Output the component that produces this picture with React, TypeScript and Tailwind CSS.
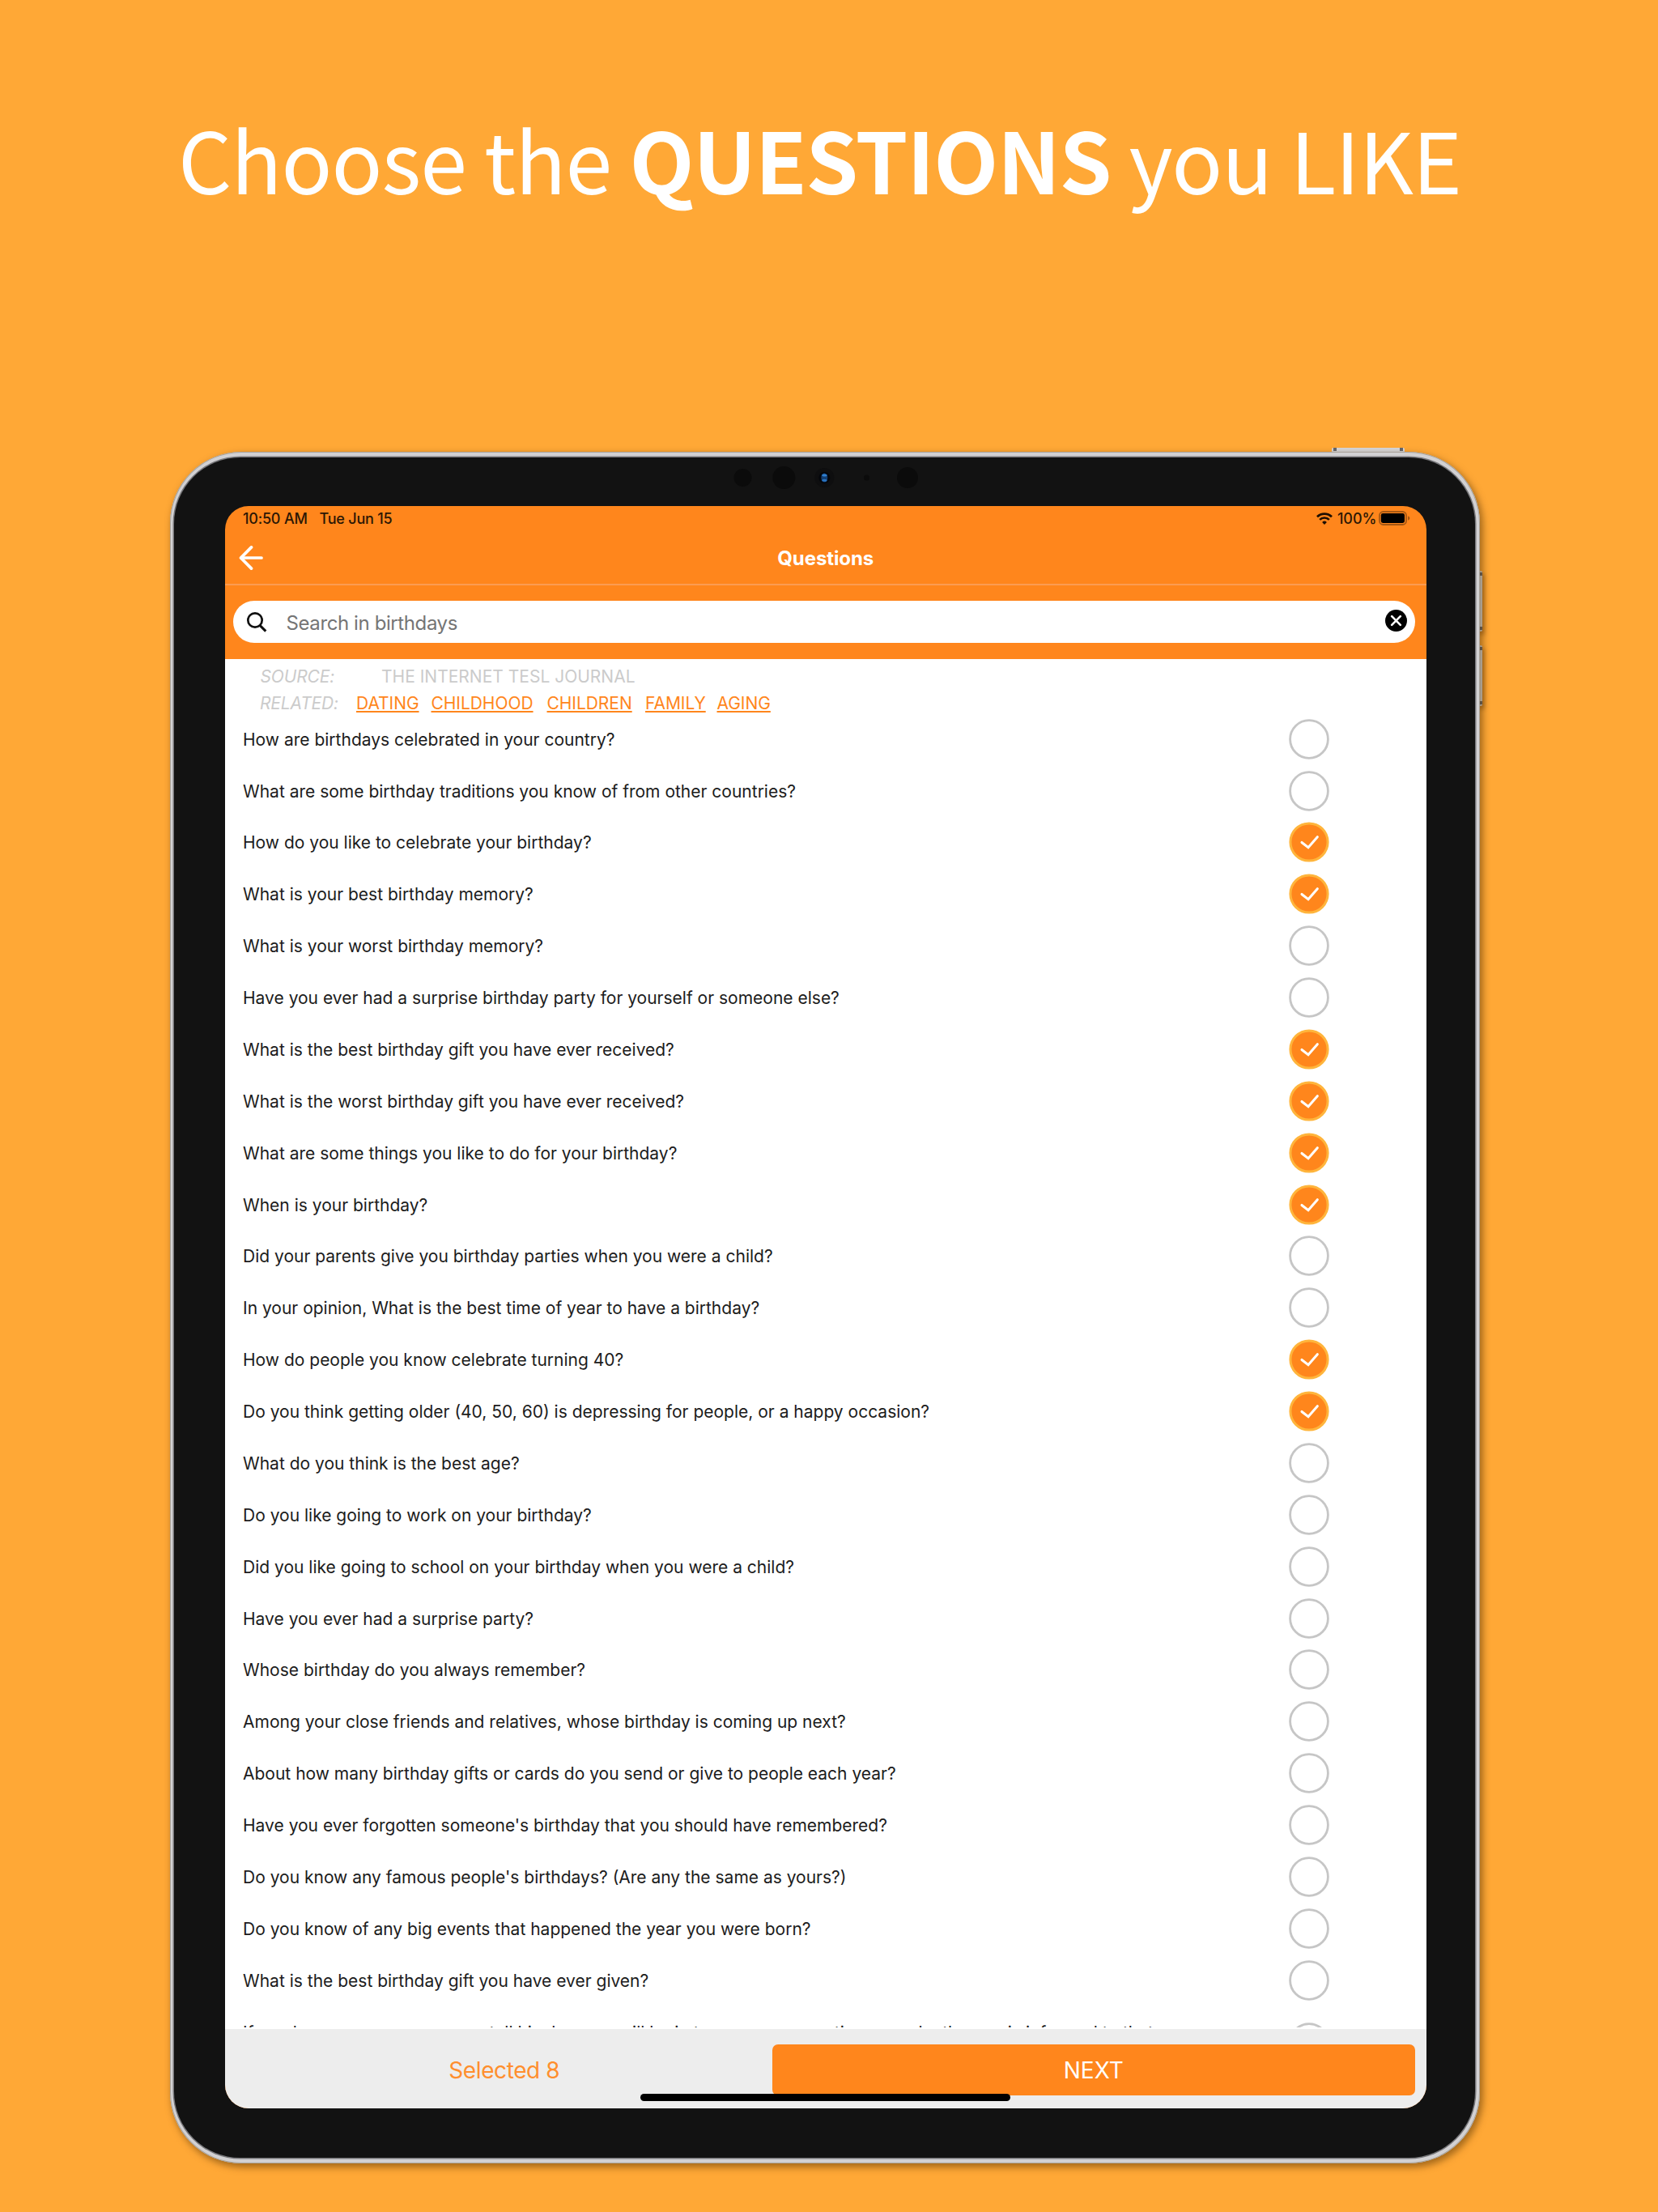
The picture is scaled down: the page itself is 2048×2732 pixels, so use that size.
type Question = { text: string; checked?: boolean; twoLine?: boolean };

const QUESTIONS: Question[] = [
  { text: 'How are birthdays celebrated in your country?' },
  { text: 'What are some birthday traditions you know of from other countries?' },
  { text: 'How do you like to celebrate your birthday?', checked: true },
  { text: 'What is your best birthday memory?', checked: true },
  { text: 'What is your worst birthday memory?' },
  { text: 'Have you ever had a surprise birthday party for yourself or someone else?' },
  { text: 'What is the best birthday gift you have ever received?', checked: true },
  { text: 'What is the worst birthday gift you have ever received?', checked: true },
  { text: 'What are some things you like to do for your birthday?', checked: true },
  { text: 'When is your birthday?', checked: true },
  { text: 'Did your parents give you birthday parties when you were a child?' },
  { text: 'In your opinion, What is the best time of year to have a birthday?' },
  { text: 'How do people you know celebrate turning 40?', checked: true },
  { text: 'Do you think getting older (40, 50, 60) is depressing for people, or a happy occasion?', checked: true },
  { text: 'What do you think is the best age?' },
  { text: 'Do you like going to work on your birthday?' },
  { text: 'Did you like going to school on your birthday when you were a child?' },
  { text: 'Have you ever had a surprise party?' },
  { text: 'Whose birthday do you always remember?' },
  { text: 'Among your close friends and relatives, whose birthday is coming up next?' },
  { text: 'About how many birthday gifts or cards do you send or give to people each year?' },
  { text: "Have you ever forgotten someone's birthday that you should have remembered?" },
  { text: "Do you know any famous people's birthdays? (Are any the same as yours?)" },
  { text: 'Do you know of any big events that happened the year you were born?' },
  { text: 'What is the best birthday gift you have ever given?' },
  { text: 'If you have a person over, can tell him how we will be in two or more questions, or why the one is informed to that', twoLine: true },
];

const RELATED = [
  { label: 'DATING', width: 'w-[76.5px]' },
  { label: 'CHILDHOOD', width: 'w-[127px]' },
  { label: 'CHILDREN', width: 'w-[105.5px]' },
  { label: 'FAMILY', width: 'w-[72.5px]' },
  { label: 'AGING', width: 'w-[66px]' },
];

function Toggle({ checked }: { checked?: boolean }) {
  return (
    <svg className="size-[50px] shrink-0" viewBox="-25 -25 50 50" fill="none">
      {checked ? (
        <>
          <circle r="23.1" fill="#ff861c" stroke="#ffb53c" strokeWidth="3" />
          <path d="M-9 0.5L-1 6.7L10.3-6.3" stroke="#fff" strokeWidth="3.1" strokeLinecap="round" />
        </>
      ) : (
        <circle r="23.4" stroke="#c6c6c6" strokeWidth="2.8" />
      )}
    </svg>
  );
}

function StatusBar() {
  return (
    <div className="flex h-[31px] shrink-0 items-center pl-[22px] pr-[19.5px] text-[18px] font-medium text-[#2b1705]">
      <span className="w-[94.5px] tracking-[-0.2px]">10:50 AM</span>
      <span className="tracking-[-0.2px]">Tue Jun 15</span>
      <svg className="ml-auto mr-[6px] h-[15px] w-[20px]" viewBox="0 0 20 15" fill="none" stroke="#1d0f03" strokeWidth="2.7">
        <path d="M1 5.3a12.7 12.7 0 0 1 18 0" />
        <path d="M4.2 8.9a8.2 8.2 0 0 1 11.6 0" />
        <path d="M10 14.9L7.1 11.9a4.1 4.1 0 0 1 5.8 0Z" fill="#1d0f03" stroke="none" />
      </svg>
      <span className="w-[51px] tracking-[-0.1px]">100%</span>
      <svg className="h-[18px] w-[39px]" viewBox="0 0 39 18" fill="none">
        <rect x="1" y="1" width="33" height="16" rx="4.5" stroke="#000" strokeOpacity=".35" strokeWidth="1.8" />
        <rect x="2.8" y="3" width="29.2" height="12" rx="2.4" fill="#000" />
        <path d="M36.2 6.3Q38.4 7.2 38.4 9T36.2 11.7Z" fill="#000" fillOpacity=".4" />
      </svg>
    </div>
  );
}

function NavBar() {
  return (
    <div className="flex h-[67px] shrink-0 items-center border-b-[2.5px] border-[#fb9c52] pl-[17px]">
      <svg className="mt-[2px] h-[30px] w-[31px]" viewBox="0 0 31 30" fill="none" stroke="#fff" strokeWidth="3.7" strokeLinecap="round" strokeLinejoin="round">
        <path d="M15.5 1.9L2.5 15L15.5 28.1" />
        <path d="M3 15H28" />
      </svg>
      <div className="mt-[3px] flex-1 pr-[48px] text-center text-[24px] font-bold tracking-[-0.1px] text-white">Questions</div>
    </div>
  );
}

function SearchBar() {
  return (
    <div className="flex h-[91.5px] shrink-0 items-center px-[10px] pr-[13.5px]">
      <div className="mb-px flex h-[51.5px] flex-1 items-center rounded-full bg-white pl-[16px] pr-[10px]">
        <svg className="size-[26px]" viewBox="0 0 26 26" fill="none" stroke="#111" strokeWidth="2.7">
          <circle cx="11" cy="11" r="8.7" />
          <path d="M17 17.3L24.3 24.6" strokeWidth="3.1" />
        </svg>
        <span className="ml-[23.5px] mt-[4px] text-[24px] tracking-[-0.4px] text-[#757575]">Search in birthdays</span>
        <svg className="mb-[3px] ml-auto size-[27px]" viewBox="0 0 27 27">
          <circle cx="13.5" cy="13.5" r="13.5" fill="#000" />
          <path d="M8.2 8.2L18.8 18.8M18.8 8.2L8.2 18.8" stroke="#fff" strokeWidth="2.6" strokeLinecap="round" />
        </svg>
      </div>
    </div>
  );
}

function QuestionList() {
  return (
    <div className="flex-1 overflow-hidden bg-white pt-[4px] text-[21px] leading-[26px] text-[#1c1c1c]">
      <div className="flex h-[33.5px] items-center pl-[43.5px] pt-[1.5px] text-[#cbcbcb]">
        <span className="w-[149.5px] italic tracking-[-0.15px]">SOURCE:</span>
        <span>THE INTERNET TESL JOURNAL</span>
      </div>
      <div className="flex h-[29.3px] items-center gap-[16px] pl-[43px] pt-[6px] text-[#ff861c]">
        <span className="w-[103px] italic tracking-[-0.15px] text-[#cbcbcb]">RELATED:</span>
        {RELATED.map((r) => (
          <a key={r.label} className={`${r.width} whitespace-nowrap tracking-[-0.05px] underline decoration-[2px] underline-offset-[2px]`}>
            {r.label}
          </a>
        ))}
      </div>
      {QUESTIONS.map((q) => (
        <div
          key={q.text}
          className={`flex items-center justify-between pl-[22px] pr-[120px] ${q.twoLine ? 'h-[89.875px]' : 'h-[63.875px]'}`}
        >
          <span className={`whitespace-nowrap pt-[2px] ${q.twoLine ? 'pb-[26px]' : ''}`}>{q.text}</span>
          <Toggle checked={q.checked} />
        </div>
      ))}
    </div>
  );
}

function Footer() {
  return (
    <div className="relative flex h-[100px] shrink-0 border-t-2 border-white bg-[#ededed] pr-[13.5px] pt-[18.5px] text-[28px]">
      <div className="flex h-[63.5px] w-[675.5px] items-center justify-center pl-[14px] pt-px tracking-[-0.4px] text-[#ff8f2e]">Selected 8</div>
      <div className="flex h-[63.5px] flex-1 items-center justify-center rounded-[7px] bg-[#ff861c] pt-px text-white">NEXT</div>
      <div className="absolute bottom-[9.5px] left-[513px] h-[9px] w-[457px] rounded-full bg-black" />
    </div>
  );
}

function CameraRow() {
  return (
    <svg className="absolute left-[696px] top-[17px] h-[30px] w-[240px]" viewBox="0 0 240 30">
      <g fill="#0b0b0b">
        <circle cx="11.5" cy="15" r="11" />
        <circle cx="62.3" cy="15" r="14" />
        <circle cx="112.3" cy="15" r="12" fill="#0e0e0f" />
        <circle cx="164.5" cy="15" r="3.5" />
        <circle cx="215" cy="15" r="13" />
      </g>
      <circle cx="112.3" cy="15" r="7" fill="#04060b" />
      <ellipse cx="112.3" cy="15" rx="4" ry="5.5" fill="#123e73" />
      <ellipse cx="112.3" cy="12" rx="3.2" ry="1.5" fill="#2f7fd0" />
      <ellipse cx="112.3" cy="18.2" rx="3.2" ry="1.5" fill="#2a74c0" />
    </svg>
  );
}

function SideButton({ className }: { className: string }) {
  return (
    <div className={`absolute flex justify-between bg-[#d6d6d8] ${className}`}>
      <span className="size-[4px] bg-[#66676b]" />
      <span className="size-[4px] bg-[#66676b]" />
    </div>
  );
}

function Tablet() {
  return (
    <div className="relative mx-[209.5px] h-[2113.5px] w-[1618px]">
      <SideButton className="left-[1435px] top-[-5px] h-[8px] w-[90px] rounded-t-[2px] px-[2px]" />
      <SideButton className="right-[-3.5px] top-[147px] h-[75px] w-[8px] flex-col items-end rounded-r-[2px] py-[2px] shadow-[3px_4px_5px_rgba(90,50,0,0.35)]" />
      <SideButton className="right-[-3.5px] top-[239px] h-[75px] w-[8px] flex-col items-end rounded-r-[2px] py-[2px] shadow-[3px_4px_5px_rgba(90,50,0,0.35)]" />
      <div className="relative size-full rounded-[88px] bg-[#d2d1d3] px-[5.5px] py-[7px] shadow-[3px_4px_8px_1px_rgba(80,45,0,0.5),inset_0_0_0_1px_#a9a39b]">
        <div className="size-full rounded-[82px] bg-[#121212] pb-[60.5px] pl-[63px] pr-[60.5px] pt-[59.5px] shadow-[0_0_0_1.5px_#77777a]">
          <div className="flex size-full flex-col overflow-hidden rounded-[29px] bg-[#ff861c]">
            <StatusBar />
            <NavBar />
            <SearchBar />
            <QuestionList />
            <Footer />
          </div>
        </div>
        <CameraRow />
      </div>
    </div>
  );
}

export default function App() {
  return (
    <div className="h-[2732px] w-[2048px] overflow-hidden bg-[#ffa836] font-['Inter',sans-serif]">
      <h1 className="h-[558px] whitespace-pre pl-[220px] pt-[135px] font-['Noto_Sans_CJK_SC',sans-serif] text-[104px] font-normal leading-[120px] tracking-[-1px] text-white">
        Choose the <b className="font-bold tracking-[-1.3px]">QUESTIONS</b> you LIKE
      </h1>
      <Tablet />
    </div>
  );
}
